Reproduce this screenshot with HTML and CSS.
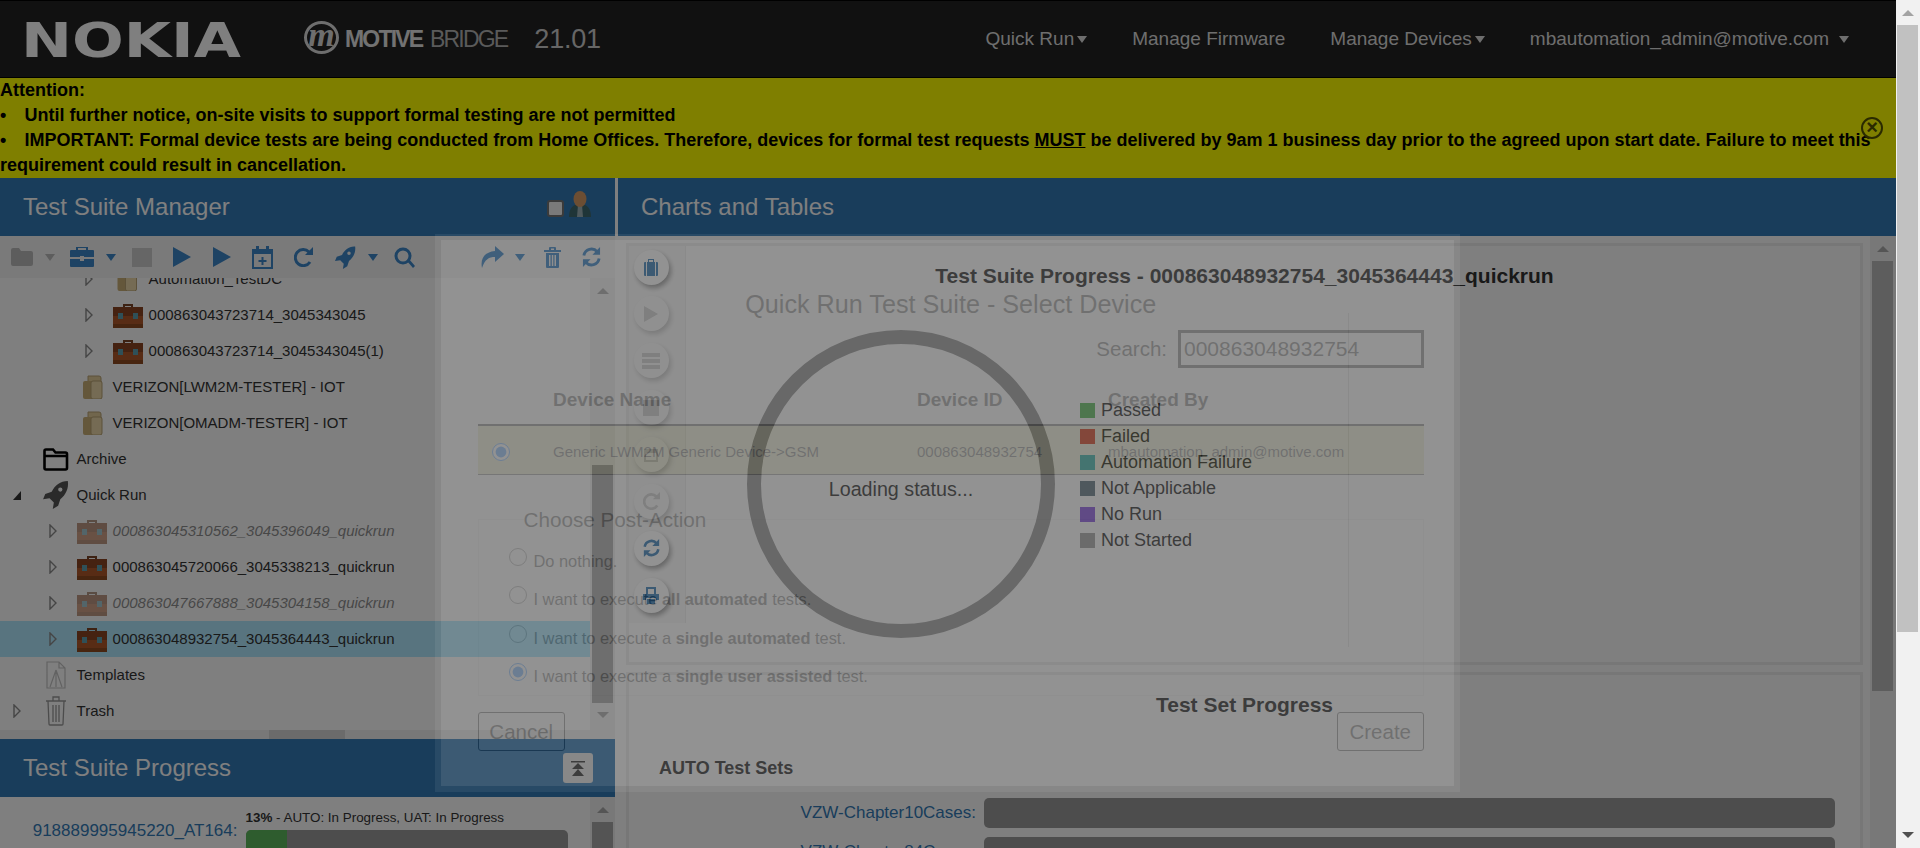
FILE: index.html
```html
<!DOCTYPE html>
<html lang="en">
<head>
    <meta charset="UTF-8">
    <title>Motive Bridge</title>
    <link rel="stylesheet" href="styles.css">
</head>
<body>
    <svg class="defs" width="0" height="0">
        <symbol id="case" viewBox="0 0 30 26">
            <path d="M10 5V2h10v3h-2V4h-6v1z" fill="#7a4526"/>
            <rect y="5" width="30" height="21" rx="1" fill="#b0582a"/>
            <rect y="5" width="30" height="9" fill="#8a4522"/>
            <rect x="5" y="11" width="5" height="6" fill="#5fa0b0"/>
            <rect x="20" y="11" width="5" height="6" fill="#5fa0b0"/>
            <rect y="22" width="30" height="4" fill="#8f4a20"/>
        </symbol>
        <symbol id="docs" viewBox="0 0 23 24">
            <path d="M6 1h11a2 2 0 0 1 2 2v18H6z" fill="#e2cc9a" stroke="#b8a274"/>
            <path d="M1 8a2 2 0 0 1 2-2h15a2 2 0 0 1 2 2v14a2 2 0 0 1-2 2H3a2 2 0 0 1-2-2z" fill="#c9ae76"/>
            <rect x="9" y="6" width="11" height="18" rx="2" fill="#ead7a8" stroke="#b8a274"/>
        </symbol>
        <symbol id="twisty" viewBox="0 0 8 14">
            <path d="M1 1l6 6-6 6z" fill="none" stroke="#8a8a8a" stroke-width="1.4"/>
        </symbol>
        <symbol id="rocket" viewBox="0 0 24 26">
            <path d="M23 0c-7 0-12 4-15 10l-6 2-2 5 6-1 4 4-1 6 5-3 2-6c5-4 8-10 7-17zM16 6a2 2 0 1 1 0 4 2 2 0 0 1 0-4z" fill-rule="evenodd"/>
        </symbol>
        <symbol id="refresh" viewBox="0 0 20 21">
            <path d="M2 9a8 8 0 0 1 14-4M18 12a8 8 0 0 1-14 4" fill="none" stroke="currentColor" stroke-width="3"/>
            <path d="M19 0v8h-8zM1 21v-8h8z"/>
        </symbol>
    </svg>

    <div class="page">
        <nav class="topnav">
            <span class="nokia">NOKIA</span>
            <span class="motive-mark">m</span>
            <span class="motive-name"><b>MOTIVE</b> BRIDGE</span>
            <span class="version">21.01</span>
            <ul class="nav-links">
                <li>Quick Run<i class="caret"></i></li>
                <li>Manage Firmware</li>
                <li>Manage Devices<i class="caret"></i></li>
                <li>mbautomation_admin@motive.com<i class="caret wide"></i></li>
            </ul>
        </nav>

        <div class="notice">
            Attention:<br>
            <span class="dot">•</span>Until further notice, on-site visits to support formal testing are not permitted<br>
            <span class="dot">•</span>IMPORTANT: Formal device tests are being conducted from Home Offices. Therefore, devices for formal test requests <u>MUST</u> be delivered by 9am 1 business day prior to the agreed upon start date. Failure to meet this requirement could result in cancellation.
            <span class="notice-close">×</span>
        </div>

        <div class="workspace">
            <section class="left">
                <header class="panel-head">
                    <h2>Test Suite Manager</h2>
                    <span class="user-tools">
                        <i class="check"></i>
                        <svg width="22" height="26" viewBox="0 0 22 26"><path d="M0 26c0-9 4-13 11-13s11 4 11 13z" fill="#3f6a70"/><path d="M9 14h4l1 12H8z" fill="#9fb4ba"/><ellipse cx="11" cy="8" rx="6.500" ry="8" fill="#d99c66"/></svg>
                    </span>
                </header>

                <div class="toolbar">
                    <span class="drop off">
                        <svg width="22" height="18" viewBox="0 0 22 18"><path d="M0 2a2 2 0 0 1 2-2h6l2 3h10a2 2 0 0 1 2 2v11a2 2 0 0 1-2 2H2a2 2 0 0 1-2-2z"/></svg>
                        <i class="caret"></i>
                    </span>
                    <span class="drop">
                        <svg width="24" height="20" viewBox="0 0 24 20"><path d="M8 3V1h8v2h2V0H6v3z"/><path d="M0 4a1 1 0 0 1 1-1h22a1 1 0 0 1 1 1v6H14v-1h-4v1H0zM0 12h10v2h4v-2h10v7a1 1 0 0 1-1 1H1a1 1 0 0 1-1-1z"/></svg>
                        <i class="caret"></i>
                    </span>
                    <i class="stop"></i>
                    <svg width="18" height="20" viewBox="0 0 18 20"><path d="M0 0l18 10L0 20z"/></svg>
                    <svg width="18" height="20" viewBox="0 0 18 20"><path d="M0 0l18 10L0 20z"/></svg>
                    <svg width="21" height="23" viewBox="0 0 21 23"><rect x="1" y="4" width="19" height="18" fill="none" stroke="currentColor" stroke-width="2"/><path d="M1 4h19v4H1zM4 0h3v5H4zM14 0h3v5h-3zM9.500 11h2v3h3v2h-3v3h-2v-3h-3v-2h3z"/></svg>
                    <svg width="19" height="20" viewBox="0 0 19 20"><path d="M16 15a8 8 0 1 1-1-10" fill="none" stroke="currentColor" stroke-width="3"/><path d="M19 0v8h-8z"/></svg>
                    <span class="drop">
                        <svg width="21" height="23" viewBox="0 0 24 26"><use href="#rocket"/></svg>
                        <i class="caret"></i>
                    </span>
                    <svg class="tool-search" width="21" height="21" viewBox="0 0 21 21"><circle cx="9" cy="9" r="7" fill="none" stroke="currentColor" stroke-width="3"/><path d="M13 14l2-2 6 7-2 2z"/></svg>
                    <span class="tool-gap"></span>
                    <span class="drop share">
                        <svg width="23" height="22" viewBox="0 0 23 22"><path d="M14 0l9 8-9 8v-5C8 11 4 13 1 22-1 12 4 6 14 5z"/></svg>
                        <i class="caret"></i>
                    </span>
                    <svg width="17" height="21" viewBox="0 0 17 21"><path d="M0 3h5V1a1 1 0 0 1 1-1h5a1 1 0 0 1 1 1v2h5v2H0zM7 1.500V3h3V1.500zM2 6h13v14a1 1 0 0 1-1 1H3a1 1 0 0 1-1-1zM5 8v11h1.500V8zM7.800 8v11h1.500V8zM10.500 8v11H12V8z" fill-rule="evenodd"/></svg>
                    <svg class="tool-refresh" width="19" height="20" viewBox="0 0 20 21"><use href="#refresh"/></svg>
                </div>

                <div class="tree-box">
                    <div class="tree-main">
                        <div class="tree-clip">
                            <div class="tree">
                                <div class="row lvl-3"><svg class="tw" width="8" height="14"><use href="#twisty"/></svg><svg class="ico" width="23" height="24"><use href="#docs"/></svg><span>Automation_TestDC</span></div>
                                <div class="row lvl-3"><svg class="tw" width="8" height="14"><use href="#twisty"/></svg><svg class="ico" width="30" height="26"><use href="#case"/></svg><span>000863043723714_3045343045</span></div>
                                <div class="row lvl-3"><svg class="tw" width="8" height="14"><use href="#twisty"/></svg><svg class="ico" width="30" height="26"><use href="#case"/></svg><span>000863043723714_3045343045(1)</span></div>
                                <div class="row lvl-2"><i class="tw"></i><svg class="ico nudge" width="23" height="24"><use href="#docs"/></svg><span>VERIZON[LWM2M-TESTER] - IOT</span></div>
                                <div class="row lvl-2"><i class="tw"></i><svg class="ico nudge" width="23" height="24"><use href="#docs"/></svg><span>VERIZON[OMADM-TESTER] - IOT</span></div>
                                <div class="row lvl-1"><i class="tw"></i><svg class="ico" width="27" height="24" viewBox="0 0 27 24"><path d="M2 21V4a1.500 1.500 0 0 1 1.500-1.500h7l2.500 3h10A1.500 1.500 0 0 1 24.500 7v14a1.500 1.500 0 0 1-1.500 1.500H3.500A1.500 1.500 0 0 1 2 21zM2 9h22.500" fill="none" stroke="#000" stroke-width="2.600"/></svg><span>Archive</span></div>
                                <div class="row lvl-1"><svg class="tw" width="8" height="9" viewBox="0 0 8 9"><path d="M8 0v9H0z" fill="#333"/></svg><svg class="ico run-ico" width="27" height="28" viewBox="0 0 24 26"><use href="#rocket"/></svg><span>Quick Run</span></div>
                                <div class="row lvl-2 faded"><svg class="tw" width="8" height="14"><use href="#twisty"/></svg><svg class="ico" width="30" height="26"><use href="#case"/></svg><span>000863045310562_3045396049_quickrun</span></div>
                                <div class="row lvl-2"><svg class="tw" width="8" height="14"><use href="#twisty"/></svg><svg class="ico" width="30" height="26"><use href="#case"/></svg><span>000863045720066_3045338213_quickrun</span></div>
                                <div class="row lvl-2 faded"><svg class="tw" width="8" height="14"><use href="#twisty"/></svg><svg class="ico" width="30" height="26"><use href="#case"/></svg><span>000863047667888_3045304158_quickrun</span></div>
                                <div class="row lvl-2 picked"><svg class="tw" width="8" height="14"><use href="#twisty"/></svg><svg class="ico" width="30" height="26"><use href="#case"/></svg><span>000863048932754_3045364443_quickrun</span></div>
                                <div class="row lvl-1"><i class="tw"></i><svg class="ico" width="22" height="28" viewBox="0 0 22 28"><path d="M2 1h12l6 6v20H2zM14 1v6h6M5 26l6-17M17 26l-6-17M11 9v17" fill="none" stroke="#c4c4c4" stroke-width="1.200"/></svg><span>Templates</span></div>
                                <div class="row lvl-1"><svg class="tw" width="8" height="14"><use href="#twisty"/></svg><svg class="ico" width="22" height="30" viewBox="0 0 22 30"><path d="M1 5h20M8 5V1h6v4M3 5l1 23a1 1 0 0 0 1 1h12a1 1 0 0 0 1-1l1-23M8 9v17M11 9v17M14 9v17" fill="none" stroke="#999" stroke-width="1.300"/></svg><span>Trash</span></div>
                            </div>
                        </div>
                        <div class="hbar"><i></i></div>
                    </div>
                    <div class="vbar tree-bar"><i class="up"></i><b></b><i class="down"></i></div>
                </div>

                <header class="panel-head">
                    <h2>Test Suite Progress</h2>
                    <button class="collapse-btn" type="button">
                        <svg width="14" height="15" viewBox="0 0 14 15"><path d="M0 0h14v1.500H0zM7 2l6 6H1zM7 8l6 7H1z"/></svg>
                    </button>
                </header>

                <div class="progress-box">
                    <a class="suite-link">918889995945220_AT164:</a>
                    <div class="suite-state">
                        <div class="state-text"><b>13%</b> - AUTO: In Progress, UAT: In Progress</div>
                        <div class="bar small"><div class="bar-fill"></div></div>
                    </div>
                    <div class="vbar progress-bar"><i class="up"></i><b></b></div>
                </div>
            </section>

            <section class="right">
                <header class="panel-head"><h2>Charts and Tables</h2></header>
                <div class="charts">
                    <div class="charts-main">
                        <div class="well well-top">
                            <div class="side-btns">
                                <span class="round"><svg width="14" height="17" viewBox="0 0 14 17"><path d="M4 3V0h6v3H9V1H5v2zM0 4a1 1 0 0 1 1-1h1v14H1a1 1 0 0 1-1-1zM3 3h8v14H3zM12 3h1a1 1 0 0 1 1 1v12a1 1 0 0 1-1 1h-1z"/></svg></span>
                                <span class="round dim-btn"><svg width="14" height="16" viewBox="0 0 14 16"><path d="M0 0l14 8-14 8z"/></svg></span>
                                <span class="round dim-btn"><svg width="18" height="16" viewBox="0 0 18 16"><path d="M0 0h18v4H0zM0 6h18v4H0zM0 12h18v4H0z"/></svg></span>
                                <span class="round dim-btn"><svg width="16" height="16"><rect width="16" height="16"/></svg></span>
                                <span class="round dim-btn"><svg width="16" height="16" viewBox="0 0 16 16"><path d="M1 2h14v13H1zM3 6v7h10V6z" fill-rule="evenodd"/></svg></span>
                                <span class="round dim-btn"><svg width="17" height="18" viewBox="0 0 19 20"><path d="M16 15a8 8 0 1 1-1-10" fill="none" stroke="currentColor" stroke-width="3"/><path d="M19 0v8h-8z"/></svg></span>
                                <span class="round"><svg width="17" height="18" viewBox="0 0 20 21"><use href="#refresh"/></svg></span>
                                <span class="round"><svg width="16" height="17" viewBox="0 0 16 17"><path d="M3 0h10v7h-2V2H5v5H3zM0 7h16v6h-3v-2H3v2H0zM4 12h8v5H4z"/></svg></span>
                            </div>
                            <div class="chart-body">
                                <h3 class="well-title">Test Suite Progress - 000863048932754_3045364443_quickrun</h3>
                                <div class="chart-row">
                                    <div class="ring"><span>Loading status...</span></div>
                                    <ul class="legend">
                                        <li><i class="sw-pass"></i>Passed</li>
                                        <li><i class="sw-fail"></i>Failed</li>
                                        <li><i class="sw-auto"></i>Automation Failure</li>
                                        <li><i class="sw-na"></i>Not Applicable</li>
                                        <li><i class="sw-norun"></i>No Run</li>
                                        <li><i class="sw-wait"></i>Not Started</li>
                                    </ul>
                                    <div class="chart-rule"></div>
                                </div>
                            </div>
                        </div>
                        <div class="well well-sets">
                            <h3 class="sets-title">Test Set Progress</h3>
                            <h4>AUTO Test Sets</h4>
                            <div class="set-row"><a>VZW-Chapter10Cases:</a><div class="bar"></div></div>
                            <div class="set-row"><a>VZW-Chapter84Cases:</a><div class="bar"></div></div>
                        </div>
                    </div>
                    <div class="vbar charts-bar"><i class="up"></i><b></b></div>
                </div>
            </section>
        </div>

        <div class="overlay"></div>

        <div class="modal">
            <h3 class="modal-title">Quick Run Test Suite - Select Device</h3>
            <div class="search-row">
                <label for="deviceSearch">Search:</label>
                <input id="deviceSearch" type="text" value="000863048932754">
            </div>
            <table class="device-table">
                <thead>
                    <tr><th></th><th>Device Name</th><th>Device ID</th><th>Created By</th></tr>
                </thead>
                <tbody>
                    <tr>
                        <td class="pick"><input type="radio" name="device" checked></td>
                        <td>Generic LWM2M Generic Device-&gt;GSM</td>
                        <td>000863048932754</td>
                        <td>mbautomation_admin@motive.com</td>
                    </tr>
                </tbody>
            </table>
            <fieldset class="post-action">
                <legend>Choose Post-Action</legend>
                <label><input type="radio" name="post">Do nothing.</label>
                <label><input type="radio" name="post">I want to execute&nbsp;<b>all automated</b>&nbsp;tests.</label>
                <label><input type="radio" name="post">I want to execute a&nbsp;<b>single automated</b>&nbsp;test.</label>
                <label><input type="radio" name="post" checked>I want to execute a&nbsp;<b>single user assisted</b>&nbsp;test.</label>
            </fieldset>
            <div class="modal-btns">
                <button type="button">Cancel</button>
                <button type="button">Create</button>
            </div>
        </div>
    </div>

    <div class="pagebar"><i class="up"></i><b></b><i class="down"></i></div>
</body>
</html>
```

FILE: styles.css
```css
* {
    box-sizing: border-box;
}
body {
    margin: 0;
    height: 848px;
    overflow: hidden;
    display: flex;
    font-family: "Liberation Sans", Arial, sans-serif;
    color: #333;
    background: #fff;
}
.defs {
    position: absolute;
}
h2, h3, h4, ul {
    margin: 0;
    padding: 0;
}
ul {
    list-style: none;
}
.page {
    position: relative;
    width: 1896px;
    height: 848px;
    overflow: hidden;
    flex: none;
}

/* top bar */
.topnav {
    height: 78px;
    background: #222;
    border-top: 1px solid #000;
    border-bottom: 1px solid #000;
    display: flex;
    align-items: center;
    color: #ddd;
}
.nokia {
    margin-left: 21px;
    margin-top: 2px;
    width: 180px;
    font-family: "DejaVu Sans", sans-serif;
    font-weight: bold;
    font-size: 48px;
    line-height: 48px;
    color: #fff;
    transform: scaleX(1.27);
    transform-origin: left center;
}
.motive-mark {
    margin-left: 103px;
    width: 35px;
    height: 33px;
    border: 3px solid #ddd;
    border-radius: 50%;
    font-family: "Liberation Serif", serif;
    font-style: italic;
    font-weight: bold;
    font-size: 34px;
    line-height: 21px;
    text-align: center;
    overflow: hidden;
    margin-top: -3px;
}
.motive-name {
    margin-left: 6px;
    font-size: 23px;
    letter-spacing: -1.800px;
    word-spacing: 3px;
    color: #b4b4b4;
    white-space: nowrap;
}
.motive-name b {
    color: #e4e4e4;
}
.version {
    margin-left: 27px;
    font-size: 27px;
    color: #ccc;
    letter-spacing: -0.200px;
}
.nav-links {
    margin-left: auto;
    margin-right: 47px;
    display: flex;
    gap: 45px;
    font-size: 19px;
}
.nav-links li {
    display: flex;
    align-items: center;
}
.caret {
    display: inline-block;
    width: 0;
    height: 0;
    border-left: 5.500px solid transparent;
    border-right: 5.500px solid transparent;
    border-top: 7px solid currentColor;
    margin-left: 3px;
}
.caret.wide {
    margin-left: 10px;
}

/* attention strip */
.notice {
    position: relative;
    height: 100px;
    background: #ff0;
    color: #000;
    font-weight: bold;
    font-size: 18px;
    line-height: 25px;
}
.dot {
    display: inline-block;
    width: 24.500px;
}
.notice-close {
    position: absolute;
    left: 1861px;
    top: 39px;
    width: 22px;
    height: 22px;
    border: 2px solid #555500;
    border-radius: 50%;
    color: #555500;
    font-size: 20px;
    line-height: 16px;
    text-align: center;
}

/* panels */
.workspace {
    display: flex;
    height: 670px;
}
.panel-head {
    height: 58px;
    background: #337ab7;
    color: #fff;
    display: flex;
    align-items: center;
    justify-content: space-between;
    padding: 0 22px 0 23px;
    flex: none;
}
.panel-head h2 {
    font-weight: normal;
    font-size: 24px;
}
.left {
    width: 618px;
    border-right: 3px solid #fff;
    flex: none;
}
.right {
    flex: 1;
    min-width: 0;
}
.user-tools {
    display: flex;
    align-items: flex-end;
    gap: 5px;
    margin-bottom: 7px;
    margin-right: 2px;
}
.check {
    width: 17px;
    height: 17px;
    background: #f4f4f4;
    border: 2px solid #777;
    border-radius: 3px;
}
.toolbar {
    height: 42px;
    background: #f5f5f5;
    display: flex;
    align-items: center;
    gap: 21.400px;
    padding: 0 14px 0 11px;
    color: #3c86c8;
    fill: currentColor;
}
.drop {
    display: flex;
    align-items: center;
    gap: 12px;
    margin-right: -6px;
}
.drop.share {
    gap: 11px;
    margin-right: -2.400px;
}
.drop .caret {
    margin: 0;
}
.tool-search {
    margin-left: 1px;
}
.off {
    color: #bbb;
}
.stop {
    width: 20px;
    height: 19px;
    background: #ccc;
}
.tool-gap {
    flex: 1;
}

/* tree */
.tree-box {
    height: 461px;
    display: flex;
}
.tree-main {
    width: 615px;
    display: flex;
    flex-direction: column;
    position: relative;
}
.tree-clip {
    height: 452px;
    overflow: hidden;
}
.tree {
    margin-top: -17px;
}
.row {
    height: 36px;
    width: 590px;
    display: flex;
    align-items: center;
    font-size: 15px;
    white-space: nowrap;
}
.row span {
    margin-top: -2px;
}
.tw {
    width: 8px;
    margin-right: 20px;
    flex: none;
}
.ico {
    width: 30px;
    margin-right: 5.600px;
    flex: none;
}
.ico.nudge {
    margin-left: 5px;
    width: 23px;
    margin-right: 7.600px;
}
.run-ico {
    fill: #555;
}
.lvl-1 {
    padding-left: 13px;
}
.lvl-2 {
    padding-left: 49px;
}
.lvl-3 {
    padding-left: 85px;
}
.faded {
    font-style: italic;
}
.faded .ico,
.faded span {
    opacity: 0.55;
}
.picked {
    background: #b0e8ff;
}
.hbar {
    height: 9px;
    background: #f1f1f1;
    padding-left: 269px;
}
.hbar i {
    display: block;
    width: 76px;
    height: 9px;
    background: #d6d6d6;
}
.vbar {
    background: #f1f1f1;
    position: relative;
    flex: none;
}
.vbar .up,
.vbar .down {
    position: absolute;
    left: 50%;
    margin-left: -6px;
    width: 0;
    height: 0;
    border-left: 6px solid transparent;
    border-right: 6px solid transparent;
}
.vbar .up {
    border-bottom: 6px solid #aaa;
}
.vbar .down {
    border-top: 6px solid #aaa;
}
.vbar b {
    position: absolute;
    display: block;
}
.tree-bar {
    width: 25px;
    margin-left: -25px;
    height: 452px;
}
.tree-bar .up {
    top: 10px;
}
.tree-bar .down {
    top: 434px;
}
.tree-bar b {
    left: 2px;
    width: 21px;
    top: 187px;
    height: 238px;
    background: #a9a9a9;
}
.collapse-btn {
    width: 30px;
    height: 30px;
    border: 0;
    border-radius: 3px;
    background: #e6e6e6;
    padding: 0;
    color: #333;
    fill: currentColor;
    display: flex;
    align-items: center;
    justify-content: center;
    margin-right: 0;
}
.progress-box {
    height: 51px;
    display: flex;
    overflow: hidden;
    position: relative;
}
.suite-link {
    width: 237.500px;
    padding-top: 23px;
    text-align: right;
    font-size: 17px;
    line-height: 22px;
    color: #337ab7;
    flex: none;
}
.suite-state {
    margin-left: 8px;
    width: 322px;
    padding-top: 12px;
}
.state-text {
    font-size: 13.400px;
    line-height: 18px;
    margin-bottom: 3px;
    white-space: nowrap;
}
.progress-bar {
    position: absolute;
    left: 590px;
    top: 0;
    width: 25px;
    height: 51px;
}
.progress-bar .up {
    top: 10px;
}
.progress-bar b {
    left: 2px;
    width: 21px;
    top: 25px;
    height: 30px;
    background: #a9a9a9;
}
.bar {
    height: 30px;
    background: #9b9b9b;
    border-radius: 5px;
    overflow: hidden;
}
.bar-fill {
    width: 13%;
    height: 100%;
    background: #5cb85c;
}

/* charts */
.charts {
    display: flex;
    height: 612px;
    overflow: hidden;
}
.charts-main {
    flex: 1;
    padding: 7px 7px 0 8px;
    min-width: 0;
}
.charts-bar {
    width: 26px;
    height: 612px;
}
.charts-bar .up {
    top: 10px;
}
.charts-bar b {
    left: 2px;
    width: 21px;
    top: 25px;
    height: 430px;
    background: #bbb;
}
.well {
    border: 3px solid #eee;
}
.well-top {
    height: 422px;
    display: flex;
    margin-bottom: 7px;
}
.side-btns {
    width: 57px;
    height: 377px;
    flex: none;
    border-right: 1px solid #ececec;
    padding: 3.500px 0 0 4.500px;
    display: flex;
    flex-direction: column;
    gap: 11.900px;
    color: #337ab7;
    fill: currentColor;
    background: #f8f8f8;
}
.round {
    width: 35px;
    height: 35px;
    border-radius: 50%;
    background: #fff;
    box-shadow: 2px 3px 5px rgba(0, 0, 0, 0.4);
    display: flex;
    align-items: center;
    justify-content: center;
    flex: none;
}
.dim-btn {
    color: #aaa;
    fill: #aaa;
    opacity: 0.5;
}
.chart-body {
    flex: 1;
    min-width: 0;
}
.well-title {
    margin: 18px 0 42px -57px;
    text-align: center;
    font-size: 21px;
    line-height: 24px;
    white-space: nowrap;
}
.chart-row {
    display: flex;
    align-items: flex-start;
    padding-left: 61px;
}
.ring {
    width: 308px;
    height: 308px;
    border: 14px solid #9c9c9c;
    border-radius: 50%;
    display: flex;
    align-items: center;
    justify-content: center;
    padding-top: 10px;
    font-size: 19.700px;
    flex: none;
}
.legend {
    margin-left: 25px;
    margin-top: 67px;
    width: 268px;
    font-size: 18px;
    flex: none;
}
.legend li {
    height: 26.100px;
    display: flex;
    align-items: center;
    white-space: nowrap;
}
.legend i {
    width: 15px;
    height: 15px;
    margin-right: 6px;
}
.sw-pass {
    background: #5fbc5f;
}
.sw-fail {
    background: #e2564a;
}
.sw-auto {
    background: #4fc0ca;
}
.sw-na {
    background: #607480;
}
.sw-norun {
    background: #8855e0;
}
.sw-wait {
    background: #a2a2a2;
}
.chart-rule {
    margin-top: -17px;
    height: 334px;
    border-left: 1px solid #eaeaea;
}
.well-sets {
    height: 300px;
    padding-top: 18px;
}
.sets-title {
    font-size: 21px;
    line-height: 24px;
    text-align: center;
}
.well-sets h4 {
    margin: 40px 0 0 30px;
    font-size: 18px;
    line-height: 22px;
}
.set-row {
    display: flex;
    align-items: center;
    gap: 8px;
    margin-bottom: 9px;
    height: 30px;
}
.well-sets h4 + .set-row {
    margin-top: 19px;
}
.set-row a {
    width: 347px;
    text-align: right;
    font-size: 17px;
    color: #337ab7;
    flex: none;
}
.set-row .bar {
    width: 851px;
    flex: none;
}

/* dialog over the page */
.overlay {
    position: absolute;
    inset: 0;
    background: rgba(0, 0, 0, 0.5);
}
.modal {
    position: absolute;
    left: 435px;
    top: 234px;
    width: 1025px;
    height: 558px;
    border: 6px solid rgba(255, 255, 255, 0.45);
    background: #fff;
    background-clip: padding-box;
    opacity: 0.15;
    padding: 0 30px 0 36.500px;
    color: #222;
}
.modal-title {
    margin: 49px 0 11px;
    font-weight: normal;
    font-size: 25.200px;
    line-height: 30px;
    text-align: center;
}
.search-row {
    display: flex;
    justify-content: flex-end;
    align-items: center;
    gap: 11px;
    font-size: 20.500px;
    height: 38px;
}
.search-row input {
    width: 246px;
    height: 38px;
    border: 3px solid #222;
    padding: 0 3px;
    font: inherit;
    font-size: 21px;
    color: #222;
}
.device-table {
    width: 100%;
    margin-top: 5px;
    border-collapse: collapse;
    table-layout: fixed;
    font-size: 15px;
}
.device-table th {
    height: 52px;
    padding: 2px 0 0;
    text-align: left;
    font-size: 19px;
    border-bottom: 2px solid #222;
}
.device-table th:first-child {
    width: 75.500px;
}
.device-table th:nth-child(2) {
    width: 364px;
}
.device-table th:nth-child(3) {
    width: 191px;
}
.device-table td {
    height: 49px;
    padding: 3px 0 0;
    background: #e8e8b0;
    border-bottom: 1px solid #444;
    white-space: nowrap;
}
.device-table .pick {
    padding-left: 14px;
}
.pick input {
    margin: 2px 0 0;
    width: 18px;
    height: 18px;
    display: block;
}
.post-action {
    margin: 30px 0 0;
    height: 191px;
    border: 1px solid #eee;
    padding: 7.500px 0 0 30px;
    min-inline-size: 0;
}
.post-action legend {
    margin-left: 15px;
    padding: 0;
    font-size: 20.700px;
    line-height: 30px;
}
.post-action label {
    display: flex;
    align-items: center;
    height: 38.500px;
    font-size: 16.400px;
    white-space: nowrap;
    position: relative;
}
.post-action input {
    margin: -9px 7px 0 0;
    width: 18px;
    height: 18px;
    flex: none;
}
.modal-btns {
    display: flex;
    justify-content: space-between;
    margin-top: 16.500px;
}
.modal-btns button {
    width: 87.500px;
    height: 39px;
    background: #fff;
    border: 1px solid #222;
    border-radius: 3px;
    padding: 0;
    font: 20.500px "Liberation Sans", Arial, sans-serif;
    color: #222;
}

/* browser bar of the window */
.pagebar {
    width: 24px;
    height: 848px;
    flex: none;
    background: #f1f1f1;
    position: relative;
}
.pagebar .up,
.pagebar .down {
    position: absolute;
    left: 6px;
    width: 0;
    height: 0;
    border-left: 6px solid transparent;
    border-right: 6px solid transparent;
}
.pagebar .up {
    top: 10px;
    border-bottom: 6px solid #a3a3a3;
}
.pagebar .down {
    top: 832px;
    border-top: 6px solid #505050;
}
.pagebar b {
    position: absolute;
    display: block;
    left: 1px;
    top: 25px;
    width: 21px;
    height: 607px;
    background: #c1c1c1;
}
```
